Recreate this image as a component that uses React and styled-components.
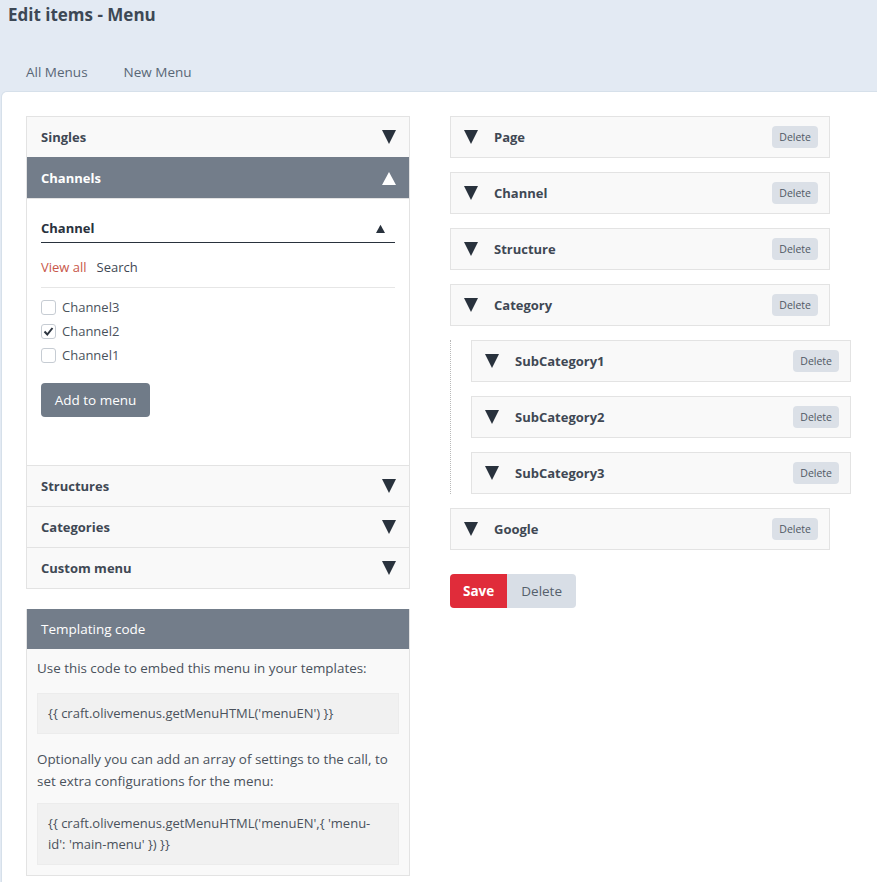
import React from "react";
import styled, { createGlobalStyle } from "styled-components";

const GlobalStyle = createGlobalStyle`
  html, body { margin: 0; padding: 0; background: #e3eaf3; }
  body {
    font-family: "Open Sans", "Noto Sans", sans-serif;
    font-size: 13px;
    color: #3f4854;
  }
  * { box-sizing: border-box; }
`;

const Page = styled.div`
  width: 877px;
  min-height: 882px;
  background: #e3eaf3;
`;

const Header = styled.header`
  height: 92px;
  padding: 2px 8px 0;
  display: flex;
  flex-direction: column;
`;

const Title = styled.h1`
  margin: 0;
  font-size: 17px;
  font-weight: 700;
  color: #3d4855;
  line-height: 26px;
`;

const Tabs = styled.nav`
  display: flex;
  gap: 36px;
  margin-top: 35px;
  padding-left: 18px;
`;

const Tab = styled.a`
  font-size: 13.5px;
  color: #596776;
  text-decoration: none;
`;

const Main = styled.main`
  margin-left: 2px;
  background: #fff;
  border-top-left-radius: 5px;
  box-shadow: 0 0 0 1px rgba(205, 216, 228, 0.6);
  padding: 24px 0 7px 24px;
  display: flex;
  gap: 40px;
  min-height: 790px;
`;

const Column = styled.div`
  width: ${(p) => p.$width}px;
  display: flex;
  flex-direction: column;
`;

const Accordion = styled.div`
  border: 1px solid #e3e3e3;
`;

const AccordionHead = styled.div`
  height: ${(p) => (p.$first ? 40 : 41)}px;
  display: flex;
  align-items: center;
  justify-content: space-between;
  padding: 0 13px 0 14px;
  font-weight: 700;
  font-size: 13px;
  background: ${(p) => (p.$open ? "#737d8a" : "#f9f9f9")};
  color: ${(p) => (p.$open ? "#fff" : "#3f4854")};
  border-top: ${(p) => (p.$first ? "none" : p.$open ? "1px solid #737d8a" : "1px solid #e3e3e3")};
`;

const AccordionBody = styled.div`
  padding: 15px 14px 48px;
  border-top: 1px solid #e3e3e3;
`;

const SubHead = styled.div`
  display: flex;
  justify-content: space-between;
  align-items: center;
  height: 29px;
  padding-right: 10px;
  border-bottom: 1px solid #29323d;
  font-weight: 700;
  color: #29323d;
`;

const Filters = styled.div`
  display: flex;
  gap: 10px;
  padding: 15px 0 11px;
  border-bottom: 1px solid #e6e6e6;
`;

const FilterLink = styled.span`
  color: ${(p) => (p.$active ? "#c8574a" : "#3f4854")};
`;

const CheckList = styled.div`
  display: flex;
  flex-direction: column;
  gap: 6px;
  padding-top: 10px;
`;

const CheckRow = styled.label`
  display: flex;
  align-items: center;
  gap: 6px;
  height: 18px;
  color: #4a525c;
`;

const Box = styled.span`
  width: 15px;
  height: 15px;
  border: 1px solid #c6ccd3;
  border-radius: 3px;
  background: #fff;
  display: flex;
  align-items: center;
  justify-content: center;
`;

const AddButton = styled.button`
  margin-top: 19px;
  width: 109px;
  height: 34px;
  border: none;
  border-radius: 4px;
  background: #707b88;
  color: #fff;
  font-family: inherit;
  font-size: 13.5px;
`;

const CodePanel = styled.section`
  margin-top: 20px;
  border: 1px solid #e3e3e3;
  border-top: none;
  background: #f9f9f9;
`;

const CodeHead = styled.div`
  height: 40px;
  background: #737d8a;
  color: #fff;
  font-size: 13.5px;
  display: flex;
  align-items: center;
  padding-left: 14px;
`;

const CodeBody = styled.div`
  padding: 8px 10px 10px;
  line-height: 22px;
  color: #4a525c;
  font-size: 13.4px;
`;

const Para = styled.p`
  margin: 0 0 ${(p) => (p.$tight ? 11 : 14)}px;
`;

const CodeBox = styled.div`
  background: #f1f1f1;
  border: 1px solid #ececec;
  padding: 9px 20px 9px 10px;
  margin-bottom: 14px;
  line-height: 21px;
  font-size: 13px;
  &:last-child { margin-bottom: 0; }
`;

const Tree = styled.div`
  display: flex;
  flex-direction: column;
  gap: 14px;
`;

const Children = styled.div`
  padding-left: 20px;
  border-left: 1px dotted #b9b9b9;
  display: flex;
  flex-direction: column;
  gap: 14px;
`;

const Item = styled.div`
  width: 380px;
  height: 42px;
  border: 1px solid #e3e3e3;
  background: #f9f9f9;
  display: flex;
  align-items: center;
  padding: 0 11px 0 13px;
`;

const ItemLabel = styled.span`
  flex: 1;
  font-weight: 700;
  color: #3f4854;
  margin-left: 16px;
`;

const SmallDelete = styled.button`
  height: 22px;
  padding: 0 7px;
  border: none;
  border-radius: 4px;
  background: #dbe0e7;
  color: #4f5864;
  font-family: inherit;
  font-size: 10.5px;
`;

const Actions = styled.div`
  display: flex;
  margin-top: 24px;
`;

const ActionButton = styled.button`
  height: 34px;
  border: none;
  font-family: inherit;
  font-size: 13.5px;
  padding: 0 ${(p) => (p.$primary ? 13 : 14)}px;
  background: ${(p) => (p.$primary ? "#e02c3a" : "#d8dee6")};
  color: ${(p) => (p.$primary ? "#fff" : "#55606c")};
  font-weight: ${(p) => (p.$primary ? 700 : 400)};
  border-radius: ${(p) => (p.$primary ? "4px 0 0 4px" : "0 4px 4px 0")};
`;

const Tri = ({ up, size = 14, color = "#29323d" }) => (
  <svg width={size} height={size} viewBox="0 0 14 14">
    {up ? (
      <polygon points="7,1 14,14 0,14" fill={color} />
    ) : (
      <polygon points="0,0 14,0 7,14" fill={color} />
    )}
  </svg>
);

const Check = () => (
  <svg width="11" height="11" viewBox="0 0 11 11">
    <polyline points="1.5,5.5 4.3,8.5 9.5,2" fill="none" stroke="#2d3540" strokeWidth="2" />
  </svg>
);

const channels = [
  { name: "Channel3", checked: false },
  { name: "Channel2", checked: true },
  { name: "Channel1", checked: false },
];

const MenuItem = ({ label }) => (
  <Item>
    <Tri />
    <ItemLabel>{label}</ItemLabel>
    <SmallDelete>Delete</SmallDelete>
  </Item>
);

export default function App() {
  return (
    <Page>
      <GlobalStyle />
      <Header>
        <Title>Edit items - Menu</Title>
        <Tabs>
          <Tab>All Menus</Tab>
          <Tab>New Menu</Tab>
        </Tabs>
      </Header>
      <Main>
        <Column $width={384}>
          <Accordion>
            <AccordionHead $first>
              Singles <Tri />
            </AccordionHead>
            <AccordionHead $open>
              Channels <Tri up color="#fff" />
            </AccordionHead>
            <AccordionBody>
              <SubHead>
                Channel <Tri up size={9} />
              </SubHead>
              <Filters>
                <FilterLink $active>View all</FilterLink>
                <FilterLink>Search</FilterLink>
              </Filters>
              <CheckList>
                {channels.map((c) => (
                  <CheckRow key={c.name}>
                    <Box>{c.checked && <Check />}</Box>
                    {c.name}
                  </CheckRow>
                ))}
              </CheckList>
              <AddButton>Add to menu</AddButton>
            </AccordionBody>
            <AccordionHead>
              Structures <Tri />
            </AccordionHead>
            <AccordionHead>
              Categories <Tri />
            </AccordionHead>
            <AccordionHead>
              Custom menu <Tri />
            </AccordionHead>
          </Accordion>
          <CodePanel>
            <CodeHead>Templating code</CodeHead>
            <CodeBody>
              <Para>Use this code to embed this menu in your templates:</Para>
              <CodeBox>{"{{ craft.olivemenus.getMenuHTML('menuEN') }}"}</CodeBox>
              <Para $tight>
                Optionally you can add an array of settings to the call, to set extra configurations for the menu:
              </Para>
              <CodeBox>{"{{ craft.olivemenus.getMenuHTML('menuEN',{ 'menu-id': 'main-menu' }) }}"}</CodeBox>
            </CodeBody>
          </CodePanel>
        </Column>
        <Column $width={401}>
          <Tree>
            <MenuItem label="Page" />
            <MenuItem label="Channel" />
            <MenuItem label="Structure" />
            <MenuItem label="Category" />
            <Children>
              <MenuItem label="SubCategory1" />
              <MenuItem label="SubCategory2" />
              <MenuItem label="SubCategory3" />
            </Children>
            <MenuItem label="Google" />
          </Tree>
          <Actions>
            <ActionButton $primary>Save</ActionButton>
            <ActionButton>Delete</ActionButton>
          </Actions>
        </Column>
      </Main>
    </Page>
  );
}
